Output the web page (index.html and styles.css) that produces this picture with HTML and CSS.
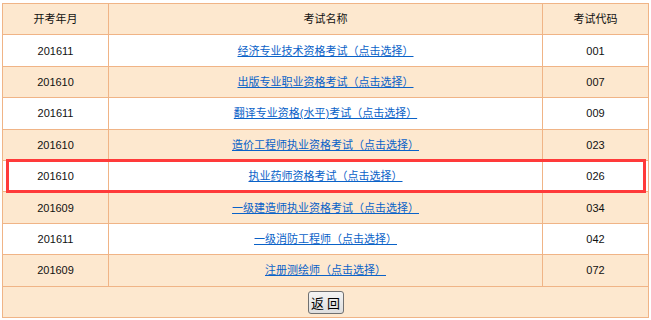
FILE: index.html
```html
<!DOCTYPE html>
<html lang="zh">
<head>
<meta charset="utf-8">
<link rel="stylesheet" href="styles.css">
</head>
<body>
<div class="wrap">
<table class="exam">
  <tr class="head"><td class="c1">开考年月</td><td class="c2">考试名称</td><td class="c3">考试代码</td></tr>
  <tr class="w"><td>201611</td><td><a href="#">经济专业技术资格考试（点击选择）</a></td><td>001</td></tr>
  <tr class="p"><td>201610</td><td><a href="#">出版专业职业资格考试（点击选择）</a></td><td>007</td></tr>
  <tr class="w"><td>201611</td><td><a href="#">翻译专业资格(水平)考试（点击选择）</a></td><td>009</td></tr>
  <tr class="p"><td>201610</td><td><a href="#">造价工程师执业资格考试（点击选择）</a></td><td>023</td></tr>
  <tr class="w"><td>201610</td><td><a href="#">执业药师资格考试（点击选择）</a></td><td>026</td></tr>
  <tr class="p"><td>201609</td><td><a href="#">一级建造师执业资格考试（点击选择）</a></td><td>034</td></tr>
  <tr class="w"><td>201611</td><td><a href="#">一级消防工程师（点击选择）</a></td><td>042</td></tr>
  <tr class="p"><td>201609</td><td><a href="#">注册测绘师（点击选择）</a></td><td>072</td></tr>
  <tr class="p foot"><td colspan="3"><button class="back" type="button">返 回</button></td></tr>
</table>
<div class="highlight"></div>
</div>
</body>
</html>
```
FILE: styles.css
```css
html, body {
  margin: 0;
  padding: 0;
  background: #ffffff;
}
body {
  font-family: "Liberation Sans", "Noto Sans CJK SC", sans-serif;
  font-size: 11px;
  color: #111;
}
.wrap {
  position: relative;
  padding: 3px 2px 0 2px;
}
.exam {
  border-collapse: collapse;
  width: 647px;
  table-layout: fixed;
}
.exam td {
  border: 1px solid #f0b486;
  text-align: center;
  vertical-align: middle;
  height: 30.4px;
  padding: 0;
  line-height: 14px;
}
.exam .c1 { width: 105px; }
.exam .c3 { width: 105px; }
.head td, .p td { background: #fde8cf; }
.w td { background: #ffffff; }
.exam a {
  color: #0a62c8;
  text-decoration: underline;
}
.foot td {
  vertical-align: top;
  padding-top: 4px;
  height: 26.4px;
}
.back {
  font-family: "Noto Sans CJK SC", sans-serif;
  font-size: 13px;
  line-height: 17px;
  height: 23px;
  width: 36px;
  padding: 0;
  border: 1px solid #707070;
  border-radius: 3px;
  background: linear-gradient(#f4f4f4, #dedede);
  color: #000;
}
.highlight {
  position: absolute;
  left: 6px;
  top: 159px;
  width: 634px;
  height: 28px;
  border: 3px solid #ff3a3a;
  pointer-events: none;
}
```
